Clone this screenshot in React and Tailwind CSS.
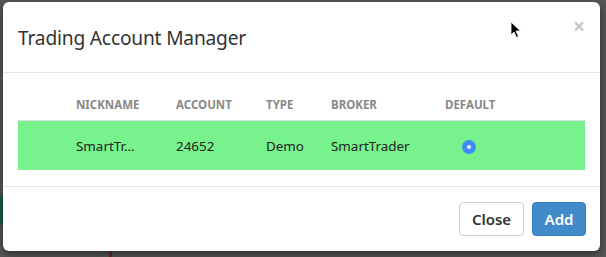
import React from "react";

export default function App() {
  const font = { fontFamily: '"Noto Sans", "Open Sans", sans-serif' };
  return (
    <div className="w-[606px] h-[257px] bg-[#575757] relative overflow-hidden" style={font}>
      <div className="absolute left-0 top-[195px] w-[3px] h-[30px] bg-[#1f5a4e]" />
      <div className="absolute left-[109px] top-[251px] w-[3px] h-[6px] bg-[#6a2a22]" />
      <div className="pt-[2px] pl-[3px]">
        <div className="w-[597px] h-[249px] bg-white rounded-[6px] shadow-[0_3px_9px_rgba(0,0,0,0.5)] flex flex-col relative">
          <div className="h-[71px] border-b border-[#e5e5e5] flex items-center px-[15px] relative">
            <h4 className="text-[19.2px] text-[#333] leading-none tracking-[-0.2px] pt-[1px]">Trading Account Manager</h4>
            <span className="absolute right-[15px] top-[14px] text-[#c8c8c8] text-[21px] font-bold leading-none">×</span>
          </div>
          <div className="px-[15px] pt-[15px] pb-[16px] border-b border-[#e5e5e5]">
            <div className="grid grid-cols-[58px_100px_90px_65px_114px_1fr] h-[33px] items-center border-b border-[#dddddd] text-[11.5px] font-bold text-[#888] uppercase pt-[1px]">
              <div />
              <div>Nickname</div>
              <div>Account</div>
              <div>Type</div>
              <div>Broker</div>
              <div>Default</div>
            </div>
            <div className="grid grid-cols-[58px_100px_90px_65px_114px_1fr] h-[49px] items-center bg-[#78f28c] text-[13.4px] text-[#222] pt-[2px]">
              <div />
              <div>SmartTr…</div>
              <div>24652</div>
              <div>Demo</div>
              <div>SmartTrader</div>
              <div className="pl-[17px]">
                <div className="w-[14px] h-[14px] rounded-full bg-[#3d8bfd] flex items-center justify-center">
                  <div className="w-[4px] h-[4px] rounded-full bg-white" />
                </div>
              </div>
            </div>
          </div>
          <div className="flex-1 flex items-center justify-end px-[14px] gap-[8px]">
            <button className="h-[34px] w-[65px] rounded-[4px] border border-[#cccccc] bg-white text-[#333] text-[15px] font-semibold">Close</button>
            <button className="h-[34px] w-[54px] rounded-[4px] border border-[#357ebd] bg-[#428bca] text-white text-[15px] font-semibold">Add</button>
          </div>
        </div>
      </div>
      <svg className="absolute left-[510px] top-[21px]" width="12" height="18" viewBox="0 0 12 18">
        <path d="M1 1 L1 14 L4 11 L6.5 16.5 L8.5 15.5 L6 10 L10.5 10 Z" fill="#000" stroke="#fff" strokeWidth="0.8" />
      </svg>
    </div>
  );
}
